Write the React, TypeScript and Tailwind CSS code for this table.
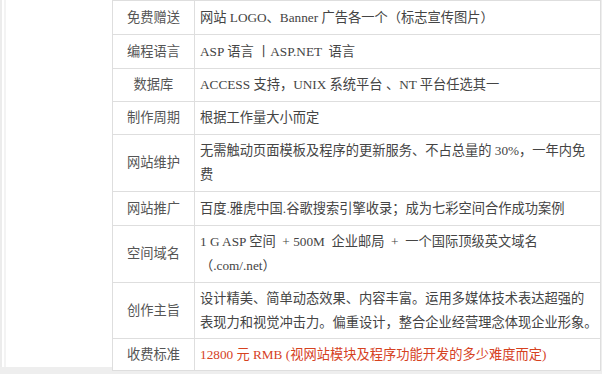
const rows: { label: string; h: string; lines: string[]; red?: boolean }[] = [
  { label: "免费赠送", h: "h-[34px]", lines: ["网站 LOGO、Banner 广告各一个（标志宣传图片）"] },
  { label: "编程语言", h: "h-[34px]", lines: ["ASP 语言 丨ASP.NET  语言"] },
  { label: "数据库", h: "h-[33px]", lines: ["ACCESS 支持，UNIX 系统平台 、NT 平台任选其一"] },
  { label: "制作周期", h: "h-[33px]", lines: ["根据工作量大小而定"] },
  {
    label: "网站维护",
    h: "h-[57px]",
    lines: ["无需触动页面模板及程序的更新服务、不占总量的 30%，一年内免", "费"],
  },
  { label: "网站推广", h: "h-[34px]", lines: ["百度.雅虎中国.谷歌搜索引擎收录；成为七彩空间合作成功案例"] },
  {
    label: "空间域名",
    h: "h-[57px]",
    lines: ["1 G ASP 空间  + 500M  企业邮局  +  一个国际顶级英文域名", "（.com/.net）"],
  },
  {
    label: "创作主旨",
    h: "h-[56px]",
    lines: [
      "设计精美、简单动态效果、内容丰富。运用多媒体技术表达超强的",
      "表现力和视觉冲击力。偏重设计，整合企业经营理念体现企业形象。",
    ],
  },
  {
    label: "收费标准",
    h: "h-[32px]",
    lines: ["12800 元 RMB (视网站模块及程序功能开发的多少难度而定)"],
    red: true,
  },
];

export default function App() {
  return (
    <div
      className="w-[602px] h-[374px] overflow-hidden flex items-start bg-[#eeeeee] text-[13.25px]"
      style={{ fontFamily: '"Liberation Serif", "Noto Sans CJK SC", serif' }}
    >
      <div className="w-[112px] h-[367px] bg-white flex">
        <div className="w-[2px] h-full bg-[#ececec]" />
        <div className="w-[2px] h-full bg-white" />
        <div className="w-[2px] h-full bg-[#f3f3f3]" />
      </div>
      <div className="w-[489px] bg-white border border-b-0 border-[#dedede]">
        {rows.map((r) => (
          <div key={r.label} className={`flex border-b border-[#dedede] ${r.h}`}>
            <div className="w-[82px] shrink-0 border-r border-[#dedede] flex items-center justify-center text-[#555555]">
              {r.label}
            </div>
            <div
              className={`flex-1 min-w-0 flex flex-col justify-center pl-[5px] leading-[24px] whitespace-pre ${
                r.red ? "text-[#d6421f]" : "text-[#444444]"
              }`}
            >
              {r.lines.map((l, i) => (
                <div key={i}>{l}</div>
              ))}
            </div>
          </div>
        ))}
      </div>
    </div>
  );
}
